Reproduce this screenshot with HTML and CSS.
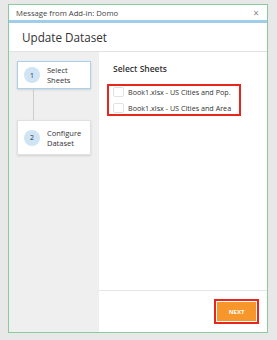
FILE: index.html
```html
<!DOCTYPE html>
<html>
<head>
    <title>Update Dataset</title>
    <link rel="stylesheet" href="styles.css">
</head>
<body>
    <div class="dialog">
        <div class="titlebar">
            <span>Message from Add-in: Domo</span>
            <span class="close">&times;</span>
        </div>
        <div class="accent"></div>
        <div class="header">Update Dataset</div>

        <div class="body">
            <div class="sidebar">
                <div class="step active">
                    <span class="num">1</span>
                    <span class="label">Select<br>Sheets</span>
                </div>
                <div class="connector"></div>
                <div class="step">
                    <span class="num">2</span>
                    <span class="label">Configure<br>Dataset</span>
                </div>
            </div>

            <div class="main">
                <div class="content">
                    <h3>Select Sheets</h3>
                    <div class="sheet-list">
                        <label class="sheet"><span class="check"></span>Book1.xlsx - US Cities and Pop.</label>
                        <label class="sheet"><span class="check"></span>Book1.xlsx - US Cities and Area</label>
                    </div>
                </div>
                <div class="footer">
                    <div class="next-wrap">
                        <button class="next">NEXT</button>
                    </div>
                </div>
            </div>
        </div>
    </div>
</body>
</html>
```

FILE: styles.css
```css
body {
    margin: 0;
    padding: 4px 9px 7px 8px;
    background: #e8e8e8;
    font-family: "Open Sans", sans-serif;
    color: #333;
}
.dialog {
    width: 258px;
    height: 327px;
    border: 1px solid #8acb9e;
    background: #fff;
    display: flex;
    flex-direction: column;
}
.titlebar {
    height: 15px;
    padding: 0 8px 0 7px;
    display: flex;
    justify-content: space-between;
    align-items: center;
    font-size: 7.7px;
    color: #444;
}
.close { font-size: 10px; color: #888; }
.accent { height: 3px; background: #a2cdea; }
.header {
    height: 28px;
    padding-left: 13px;
    display: flex;
    align-items: center;
    font-size: 11.7px;
    color: #333;
    border-bottom: 1px solid #e2e2e2;
}
.body { flex: 1; display: flex; }
.sidebar {
    width: 74px;
    padding: 9px 8px;
    background: #efefef;
    display: flex;
    flex-direction: column;
}
.step {
    height: 35px;
    display: flex;
    align-items: center;
    gap: 7px;
    padding-left: 6px;
    background: #fff;
    border: 1px solid #e0e0e0;
    box-shadow: 0 1px 2px rgba(0,0,0,0.12);
    box-sizing: border-box;
}
.step.active { height: 28px; border-color: #a9d1ee; }
.num {
    width: 16px;
    height: 16px;
    border-radius: 50%;
    background: #cfe4f4;
    font-size: 7px;
    display: flex;
    align-items: center;
    justify-content: center;
}
.label { font-size: 7.5px; line-height: 10px; }
.connector {
    width: 1px;
    height: 31px;
    margin-left: 16px;
    background: #cccccc;
}
.main { flex: 1; display: flex; flex-direction: column; }
.content { flex: 1; padding: 11px 0 0 8px; }
h3 {
    margin: 0 0 10px 6px;
    font-size: 8.5px;
    font-weight: 600;
}
.sheet-list {
    width: 130px;
    border: 2px solid #e8261c;
    display: flex;
    flex-direction: column;
    gap: 4px;
}
.sheet {
    display: flex;
    align-items: center;
    gap: 4px;
    padding-left: 4px;
    height: 12px;
    font-size: 7.2px;
    white-space: nowrap;
}
.check {
    flex: none;
    width: 9px;
    height: 8px;
    border: 1px solid #e2e2e2;
    border-radius: 2px;
}
.footer {
    height: 41px;
    border-top: 1px solid #e6e6e6;
    display: flex;
    align-items: center;
    justify-content: flex-end;
    padding-right: 8px;
}
.next-wrap {
    border: 2px solid #e8261c;
    padding: 1px;
}
.next {
    width: 39px;
    height: 19px;
    border: none;
    background: #f7962b;
    color: #fff;
    font-family: "Open Sans", sans-serif;
    font-size: 6px;
    font-weight: 700;
    display: block;
}
```
